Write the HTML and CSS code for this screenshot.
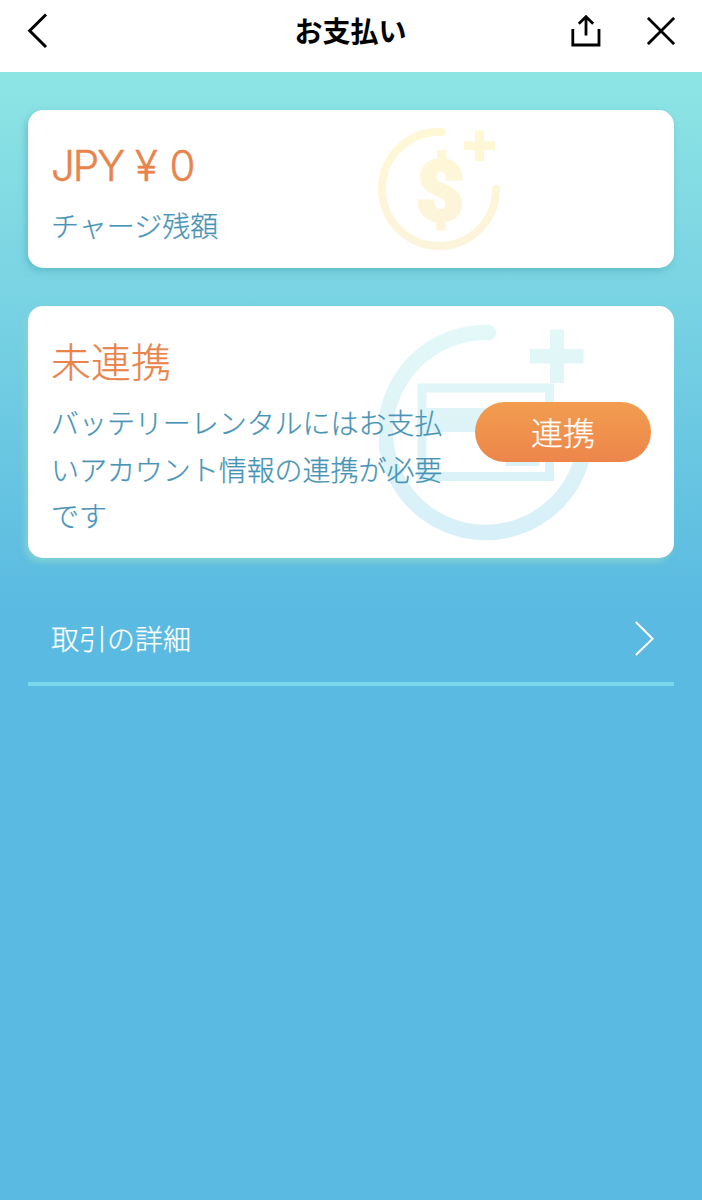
FILE: index.html
```html
<!DOCTYPE html>
<html lang="ja">
<head>
    <meta charset="UTF-8">
    <meta name="viewport" content="width=device-width, initial-scale=1.0">
    <title>お支払い</title>
    <link rel="stylesheet" href="styles.css">
</head>
<body>
    <header class="navbar">
        <button class="nav-btn" aria-label="戻る">
            <svg width="24" height="36" viewBox="0 0 24 36" fill="none" stroke="#000" stroke-width="3">
                <path d="M21 1.5 L4.7 17.7 L21 34"/>
            </svg>
        </button>
        <h1 class="nav-title">お支払い</h1>
        <div class="nav-actions">
            <button class="nav-btn" aria-label="共有">
                <svg width="30" height="32" viewBox="0 0 30 32" fill="none" stroke="#000" stroke-width="2.8">
                    <path d="M1.8 14 V30 H28 V14"/>
                    <path d="M15 20.5 V2.5 M7.8 8.7 L15 1.7 L22.2 8.7"/>
                </svg>
            </button>
            <button class="nav-btn" aria-label="閉じる">
                <svg width="28" height="28" viewBox="0 0 28 28" fill="none" stroke="#000" stroke-width="2.8">
                    <path d="M0.9 0.9 L27.1 27.1 M27.1 0.9 L0.9 27.1"/>
                </svg>
            </button>
        </div>
    </header>

    <main class="content">
        <section class="card card-balance">
            <svg class="watermark watermark-coin" width="124" height="124" viewBox="0 0 124 124">
                <defs>
                    <linearGradient id="coin" gradientUnits="userSpaceOnUse" x1="0" y1="0" x2="0" y2="124">
                        <stop offset="0" stop-color="#fff8d5"/>
                        <stop offset="1" stop-color="#fcf3dc"/>
                    </linearGradient>
                </defs>
                <path d="M64.5 5 A57 57 0 1 0 119 62" fill="none" stroke="url(#coin)" stroke-width="8" stroke-linecap="round"/>
                <path d="M98 3.5 h9 v11 h11 v8.5 h-11 v11 h-9 v-11 h-11 v-8.5 h11 z" fill="url(#coin)"/>
                <text class="coin-sign" x="63" y="93" text-anchor="middle" fill="url(#coin)" stroke="url(#coin)" stroke-width="3">$</text>
            </svg>
            <div class="amount"><span class="currency">JPY</span> ¥ 0</div>
            <div class="label">チャージ残額</div>
        </section>

        <section class="card card-link">
            <svg class="watermark watermark-account" width="216" height="218" viewBox="0 0 216 218">
                <defs>
                    <linearGradient id="account" gradientUnits="userSpaceOnUse" x1="0" y1="0" x2="0" y2="218">
                        <stop offset="0" stop-color="#e3f8f7"/>
                        <stop offset="1" stop-color="#d7eff8"/>
                    </linearGradient>
                </defs>
                <path d="M109.5 8.5 A100 100 0 1 0 205 126" fill="none" stroke="url(#account)" stroke-width="15.5" stroke-linecap="round"/>
                <path d="M171 5.5 h14 v19.5 h19.5 v14.5 h-19.5 v19.5 h-14 v-19.5 h-20 v-14.5 h20 z" fill="url(#account)"/>
                <rect x="43" y="64" width="127.5" height="88.5" fill="none" stroke="url(#account)" stroke-width="9"/>
                <path d="M43 84 h127 v24 h-127 z M126.5 127 h34 v15 h-34 z" fill="url(#account)"/>
            </svg>
            <div class="link-info">
                <div class="status">未連携</div>
                <p class="description">バッテリーレンタルにはお支払いアカウント情報の連携が必要です</p>
            </div>
            <button class="link-btn">連携</button>
        </section>

        <a class="detail-row">
            <span>取引の詳細</span>
            <svg width="22" height="36" viewBox="0 0 22 36" fill="none" stroke="#fff" stroke-width="2">
                <path d="M1.8 2 L18.6 18.8 L1.8 35"/>
            </svg>
        </a>
    </main>
</body>
</html>
```
FILE: styles.css
```css
* {
    margin: 0;
    padding: 0;
    box-sizing: border-box;
}

body {
    font-family: 'Noto Sans CJK JP', sans-serif;
    font-weight: 300;
    -webkit-text-stroke: 0.25px currentColor;
    min-height: 100vh;
    display: flex;
    flex-direction: column;
    background: #5ab9e0;
}

button {
    border: none;
    background: none;
    font-family: inherit;
    cursor: pointer;
}

.navbar {
    height: 72px;
    padding: 0 27px 10px 25px;
    display: grid;
    grid-template-columns: 1fr auto 1fr;
    align-items: center;
    background: #fff;
}

.nav-btn {
    display: flex;
    justify-self: start;
}

.nav-title {
    font-size: 28px;
    font-weight: 700;
    line-height: 40px;
    padding: 0 0 2px 1px;
    color: #000;
    -webkit-text-stroke: 0;
}

.nav-actions {
    display: flex;
    justify-content: flex-end;
    align-items: center;
    gap: 46px;
}

.content {
    flex: 1;
    padding: 38px 28px 0;
    background: linear-gradient(180deg, #8ee5e4 0, #5abae1 540px);
}

.card {
    position: relative;
    padding: 0 23px;
    background: #fff;
    border-radius: 15px;
}

.card-balance {
    height: 158px;
    padding-top: 29px;
    margin-bottom: 38px;
    box-shadow: -2px 3px 7px rgba(75, 165, 180, 0.55);
}

.card-link {
    height: 252px;
    padding-top: 26px;
    display: flex;
    justify-content: space-between;
    box-shadow: -3px 4px 6px rgba(135, 212, 205, 0.8);
}

.watermark {
    position: absolute;
}

.watermark-coin {
    left: 349px;
    top: 17px;
}

.watermark-account {
    left: 351px;
    top: 18px;
}

.coin-sign {
    font-family: Roboto, sans-serif;
    font-size: 83px;
    font-weight: 900;
    -webkit-text-stroke: 0;
}

.amount {
    font-family: Inter, sans-serif;
    font-size: 42px;
    line-height: 54px;
    color: #e9834a;
    -webkit-text-stroke-width: 0.5px;
}

.currency {
    letter-spacing: -2px;
}

.label {
    margin-top: 12px;
    font-size: 28px;
    line-height: 40px;
    color: #4794b6;
}

.link-info {
    position: relative;
    width: 394px;
}

.status {
    font-size: 40px;
    line-height: 56px;
    color: #e9834a;
}

.description {
    margin-top: 11px;
    font-size: 28px;
    line-height: 46.5px;
    letter-spacing: -0.05px;
    color: #4794b6;
}

.link-btn {
    position: relative;
    width: 176px;
    height: 60px;
    margin: 70px 0 0;
    border-radius: 30px;
    background: linear-gradient(180deg, #f29d50, #ed854b);
    font-size: 32px;
    font-weight: 300;
    line-height: 58px;
    padding-bottom: 2px;
    color: #fff;
}

.detail-row {
    height: 128px;
    padding: 36px 18px 0 23px;
    display: flex;
    justify-content: space-between;
    align-items: center;
    border-bottom: 4px solid #7ad7ec;
    font-size: 28px;
    color: #fff;
}
```
